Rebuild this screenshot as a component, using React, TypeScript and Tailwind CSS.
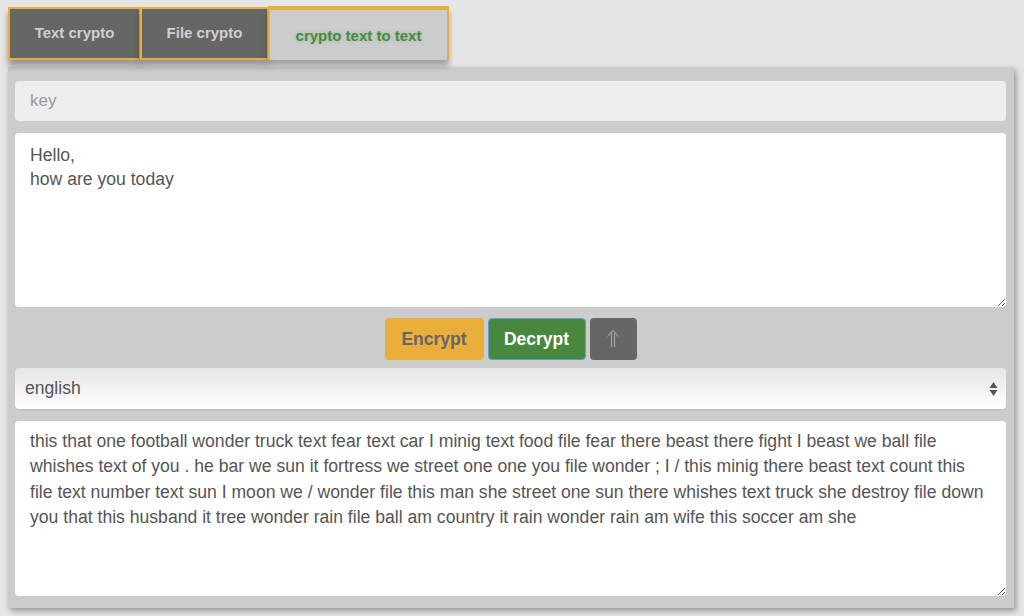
import React from 'react';

const OUTPUT =
  'this that one football wonder truck text fear text car I minig text food file fear there beast there fight I beast we ball file whishes text of you . he bar we sun it fortress we street one one you file wonder ; I / this minig there beast text count this file text number text sun I moon we / wonder file this man she street one sun there whishes text truck she destroy file down you that this husband it tree wonder rain file ball am country it rain wonder rain am wife this soccer am she';

const tabs = [
  { label: 'Text crypto', w: 'w-[133px]' },
  { label: 'File crypto', w: 'w-[129px]' },
];

const App: React.FC = () => {
  return (
    <div className="min-h-[616px] bg-[#e6e6e6] pl-2 pr-[10px] pt-[6px] font-['Liberation_Sans',Arial,sans-serif]">
      {/* tabs */}
      <div className="flex items-end h-[54px]">
        {tabs.map((t) => (
          <div
            key={t.label}
            className={`${t.w} h-[53px] bg-[#666] border-2 border-[#e8ad3c] -mr-[1px] flex items-center justify-center text-[15px] font-bold text-[#cfcfcf] shadow-[0_6px_6px_rgba(0,0,0,0.35)]`}
          >
            {t.label}
          </div>
        ))}
        <div className="w-[181px] h-[54px] bg-[#cccccc] border-x-2 border-b-0 border-t-[4px] border-[#e8ad3c] flex items-center justify-center pt-[2px] text-[15px] font-bold text-[#3f8f3b] shadow-[0_6px_6px_rgba(0,0,0,0.3)] [text-shadow:0_0_4px_rgba(0,0,0,0.15)]">
          crypto text to text
        </div>
      </div>

      {/* panel */}
      <div className="mt-[7px] bg-[#cccccc] pl-[7px] pr-[8px] pt-[14px] pb-[12px] shadow-[2px_3px_6px_rgba(0,0,0,0.35)]">
        <input
          placeholder="key"
          className="block w-full h-[40px] rounded-[4px] bg-[#eeeeee] px-[15px] text-[17px] text-[#555] placeholder:text-[#999] outline-none"
        />
        <textarea
          defaultValue={'Hello,\nhow are you today'}
          className="block w-full h-[174px] mt-[12px] rounded-[4px] bg-white px-[15px] py-[10px] text-[17.6px] leading-[24px] text-[#555] outline-none"
        />

        <div className="flex justify-center gap-[4px] mt-[11px]">
          <button className="w-[99px] h-[42px] rounded-[4px] bg-[#e9ae3c] text-[17.5px] font-bold text-[#666]">
            Encrypt
          </button>
          <button className="w-[98px] h-[42px] rounded-[4px] bg-[#47873e] border border-[#5b9fcf] text-[17.5px] font-bold text-white">
            Decrypt
          </button>
          <button className="w-[47px] h-[42px] rounded-[4px] bg-[#666] flex items-center justify-center">
            <svg width="14" height="20" viewBox="0 0 14 20" fill="none" stroke="#a8a8a8" strokeWidth="1.1">
              <path d="M5.5 4 V18 M8.5 4 V18" />
              <path d="M1.5 7.5 L7 1.5 L12.5 7.5" />
            </svg>
          </button>
        </div>

        <div className="mt-[8px] h-[41px] rounded-[4px] bg-gradient-to-b from-[#e6e6e6] to-white flex items-center justify-between pl-[10px] pr-[8px] text-[17.6px] text-[#555] shadow-[0_1px_1px_rgba(0,0,0,0.08)]">
          <span>english</span>
          <svg width="9" height="16" viewBox="0 0 9 16" fill="#555">
            <path d="M4.5 1 L8.5 7 H0.5 Z" />
            <path d="M0.5 9 H8.5 L4.5 15 Z" />
          </svg>
        </div>

        <textarea
          readOnly
          defaultValue={OUTPUT}
          className="block w-full h-[175px] mt-[12px] rounded-[4px] bg-white px-[15px] py-[8px] text-[17.6px] leading-[25.4px] text-[#555] outline-none"
        />
      </div>
    </div>
  );
};

export default App;
